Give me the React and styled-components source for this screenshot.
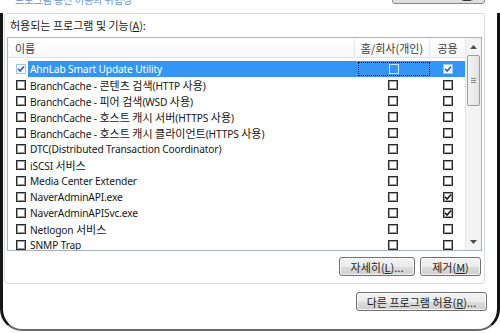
import styled, { createGlobalStyle } from "styled-components";

const GlobalStyle = createGlobalStyle`
  html, body {
    margin: 0;
    padding: 0;
    background: #fff;
  }
  body {
    font-family: "Noto Sans", "Noto Sans CJK KR", sans-serif;
    color: #1e1e1e;
  }
`;

const programs = [
  { name: "AhnLab Smart Update Utility", on: true, pub: true, selected: true },
  { name: "BranchCache - 콘텐츠 검색(HTTP 사용)" },
  { name: "BranchCache - 피어 검색(WSD 사용)" },
  { name: "BranchCache - 호스트 캐시 서버(HTTPS 사용)" },
  { name: "BranchCache - 호스트 캐시 클라이언트(HTTPS 사용)" },
  { name: "DTC(Distributed Transaction Coordinator)" },
  { name: "iSCSI 서비스" },
  { name: "Media Center Extender" },
  { name: "NaverAdminAPI.exe", pub: true },
  { name: "NaverAdminAPISvc.exe", pub: true },
  { name: "Netlogon 서비스" },
  { name: "SNMP Trap" },
];

// hangul runs get a slightly bigger size than the latin text
const splitHangul = (text) =>
  text.split(/([\uac00-\ud7a3]+)/).filter(Boolean);

const CheckMark = ({ color }) => (
  <svg width="8" height="8" viewBox="0 0 8 8">
    <path d="M1 3.8 L3.1 6 L7 1.4" fill="none" stroke={color} strokeWidth="1.6" />
  </svg>
);

const CheckBox = ({ checked, tone }) => (
  <Box $tone={tone}>
    {checked ? <CheckMark color={tone === "blue" ? "#2760b8" : "#1a1a1a"} /> : null}
  </Box>
);

const Shield = () => (
  <svg width="12" height="14" viewBox="0 0 12 14">
    <path d="M6 1 L11 3 V7 C11 10 8.5 12 6 13 C3.5 12 1 10 1 7 V3 Z" fill="#2f6fd1" />
    <path d="M6 1 L11 3 V7 L6 7 Z M6 7 H1 C1 10 3.5 12 6 13 Z" fill="#f2c21b" />
  </svg>
);

const Row = ({ item }) => (
  <ListRow>
    <NameCell>
      <CheckBox checked={item.on} tone={item.selected ? "blue" : "dark"} />
      <NameText $selected={item.selected}>
        {splitHangul(item.name).map((part, i) =>
          /[\uac00-\ud7a3]/.test(part) ? <Hangul key={i}>{part}</Hangul> : part
        )}
      </NameText>
    </NameCell>
    <ColCell $selected={item.selected}>
      <FocusRing $on={item.selected}>
        <CheckBox checked={item.home} tone={item.selected ? "ghost" : "dark"} />
      </FocusRing>
    </ColCell>
    <ColCell $selected={item.selected}>
      <CheckBox checked={item.pub} tone={item.selected ? "blue" : "dark"} />
    </ColCell>
  </ListRow>
);

const App = () => {
  return (
    <Page>
      <GlobalStyle />
      <TopStrip>
        <RiskLink>프로그램 통신 허용의 위험성</RiskLink>
        <TopButton>
          <Shield />
          <span>
            설정 변경(<u>N</u>)
          </span>
        </TopButton>
      </TopStrip>
      <Frame>
        <Panel>
          <Label>
            허용되는 프로그램 및 기능(<u>A</u>):
          </Label>
          <ListBox>
            <ListMain>
              <Header>
                <HeadCell>이름</HeadCell>
                <HeadCell $center>홈/회사(개인)</HeadCell>
                <HeadCell $center $last>
                  공용
                </HeadCell>
              </Header>
              <Body>
                {programs.map((item, index) => (
                  <Row key={index} item={item} />
                ))}
              </Body>
            </ListMain>
            <Scrollbar>
              <ArrowButton>
                <svg width="7" height="4" viewBox="0 0 7 4">
                  <path d="M0 4 L3.5 0 L7 4 Z" fill="#4d4d4d" />
                </svg>
              </ArrowButton>
              <Thumb>
                <Grip />
              </Thumb>
              <Track />
              <ArrowButton>
                <svg width="7" height="4" viewBox="0 0 7 4">
                  <path d="M0 0 L7 0 L3.5 4 Z" fill="#4d4d4d" />
                </svg>
              </ArrowButton>
            </Scrollbar>
          </ListBox>
          <ButtonRow>
            <Button $w={76}>
              자세히(<u>L</u>)...
            </Button>
            <Button $w={61}>
              제거(<u>M</u>)
            </Button>
          </ButtonRow>
        </Panel>
        <BottomRow>
          <Button $w={131}>
            다른 프로그램 허용(<u>R</u>)...
          </Button>
        </BottomRow>
      </Frame>
    </Page>
  );
};

const Page = styled.div`
  width: 500px;
  height: 333px;
  overflow: hidden;
  display: flex;
  flex-direction: column;
  background: #fff;
`;
const TopStrip = styled.div`
  height: 13px;
  flex: none;
  overflow: hidden;
  display: flex;
  justify-content: space-between;
  align-items: flex-start;
  padding: 0 15px 0 15px;
`;
const RiskLink = styled.span`
  margin-top: -7px;
  font-size: 10px;
  line-height: 14px;
  color: #6b93d6;
  font-family: "Noto Sans CJK KR", sans-serif;
`;
const TopButton = styled.div`
  margin-top: -16px;
  height: 20px;
  width: 93px;
  box-sizing: border-box;
  border: 1px solid #8a8a8a;
  border-radius: 3px;
  background: linear-gradient(#f2f2f2, #dcdcdc);
  display: flex;
  align-items: center;
  justify-content: center;
  gap: 4px;
  font-size: 10.5px;
  color: #333;
  font-family: "Noto Sans CJK KR", sans-serif;
`;
const Frame = styled.div`
  flex: 1;
  display: flex;
  flex-direction: column;
  margin-bottom: 2px;
  border-left: 3px solid #161616;
  border-right: 3px solid #111;
  border-bottom: 2px solid #6a6a6a;
  border-bottom-left-radius: 22px;
  border-bottom-right-radius: 22px;
`;
const Panel = styled.div`
  height: 271px;
  box-sizing: border-box;
  margin: 0 12px 0 1px;
  padding: 0 2px;
  border: 1px solid #d6dbe1;
  border-radius: 3px;
  display: flex;
  flex-direction: column;
`;
const Label = styled.div`
  height: 23px;
  line-height: 23px;
  padding-left: 3px;
  font-size: 11px;
  color: #1a1a1a;
  font-family: "Noto Sans CJK KR", sans-serif;
`;
const ListBox = styled.div`
  height: 214px;
  box-sizing: border-box;
  border: 1px solid #a9b1ba;
  display: flex;
  overflow: hidden;
`;
const ListMain = styled.div`
  flex: 1;
  display: flex;
  flex-direction: column;
  min-width: 0;
`;
const Header = styled.div`
  height: 20px;
  flex: none;
  box-sizing: border-box;
  display: grid;
  grid-template-columns: 1fr 75px 35px;
  border-bottom: 1px solid #e2e5e8;
  background: linear-gradient(#ffffff, #f7f8fa);
`;
const HeadCell = styled.div`
  display: flex;
  align-items: center;
  justify-content: ${(p) => (p.$center ? "center" : "flex-start")};
  padding-left: ${(p) => (p.$center ? 0 : "7px")};
  border-right: ${(p) => (p.$last ? "none" : "1px solid #e3e6ea")};
  font-size: 11px;
  color: #3a3a3a;
  font-family: "Noto Sans CJK KR", sans-serif;
`;
const Body = styled.div`
  flex: 1;
  padding-top: 3px;
  overflow: hidden;
`;
const ListRow = styled.div`
  height: 16px;
  display: grid;
  grid-template-columns: 1fr 75px 35px;
`;
const NameCell = styled.div`
  display: flex;
  align-items: center;
  padding-left: 8px;
  min-width: 0;
`;
const NameText = styled.span`
  flex: 1;
  height: 16px;
  line-height: 16px;
  margin-left: 2px;
  padding-left: 2px;
  white-space: nowrap;
  overflow: hidden;
  font-size: 10.2px;
  letter-spacing: -0.15px;
  color: ${(p) => (p.$selected ? "#fff" : "#161616")};
  background: ${(p) => (p.$selected ? "#3595f5" : "transparent")};
`;
const Hangul = styled.span`
  font-size: 11px;
  letter-spacing: 0;
  font-family: "Noto Sans CJK KR", sans-serif;
`;
const ColCell = styled.div`
  display: flex;
  align-items: center;
  justify-content: center;
  background: ${(p) => (p.$selected ? "#3595f5" : "transparent")};
`;
const FocusRing = styled.div`
  box-sizing: border-box;
  width: ${(p) => (p.$on ? "72px" : "auto")};
  height: ${(p) => (p.$on ? "14px" : "auto")};
  margin-left: ${(p) => (p.$on ? "3px" : 0)};
  border: ${(p) => (p.$on ? "1px dotted #111" : "none")};
  display: flex;
  align-items: center;
  justify-content: center;
`;
const Box = styled.span`
  flex: none;
  box-sizing: border-box;
  width: 10px;
  height: 10px;
  display: inline-flex;
  align-items: center;
  justify-content: center;
  border: 1px solid
    ${(p) => (p.$tone === "ghost" ? "#cfe4ff" : p.$tone === "blue" ? "#9cc2f0" : "#2b2b2b")};
  box-shadow: ${(p) => (p.$tone === "dark" ? "inset 0 0 0 1px #9a9a9a" : "none")};
  background: ${(p) => (p.$tone === "ghost" ? "transparent" : "#fff")};
`;
const Scrollbar = styled.div`
  width: 15px;
  flex: none;
  display: flex;
  flex-direction: column;
  background: #f3f3f3;
  border-left: 1px solid #e6e6e6;
`;
const ArrowButton = styled.div`
  height: 17px;
  flex: none;
  display: flex;
  align-items: center;
  justify-content: center;
`;
const Thumb = styled.div`
  height: 51px;
  flex: none;
  margin: 0 1px;
  box-sizing: border-box;
  border: 1px solid #9d9d9d;
  border-radius: 2px;
  background: linear-gradient(90deg, #f3f3f3, #e2e2e2);
  display: flex;
  align-items: center;
  justify-content: center;
`;
const Grip = styled.div`
  width: 5px;
  height: 5px;
  background: repeating-linear-gradient(#8a8a8a 0 1px, transparent 1px 2px);
`;
const Track = styled.div`
  flex: 1;
`;
const ButtonRow = styled.div`
  margin-top: 6px;
  display: flex;
  justify-content: flex-end;
  gap: 5px;
  padding-right: 1px;
`;
const BottomRow = styled.div`
  margin-top: 8px;
  margin-right: 10px;
  display: flex;
  justify-content: flex-end;
`;
const Button = styled.div`
  width: ${(p) => p.$w}px;
  height: 19px;
  box-sizing: border-box;
  border: 1px solid #707070;
  border-radius: 3px;
  background: linear-gradient(#f3f3f3 0%, #ebebeb 50%, #dddddd 51%, #cfcfcf 100%);
  box-shadow: inset 0 0 0 1px rgba(255, 255, 255, 0.75);
  display: flex;
  align-items: center;
  justify-content: center;
  font-size: 11px;
  color: #1e1e1e;
  font-family: "Noto Sans CJK KR", sans-serif;
  u {
    text-underline-offset: 1px;
  }
`;

export default App;
